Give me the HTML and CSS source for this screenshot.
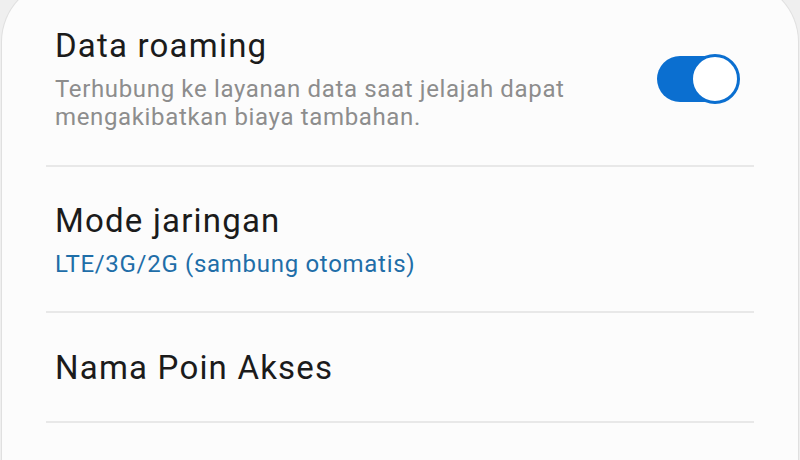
FILE: index.html
```html
<!DOCTYPE html>
<html lang="id">
<head>
    <meta charset="UTF-8">
    <meta name="viewport" content="width=device-width, initial-scale=1.0">
    <title>Jaringan seluler</title>
    <link rel="stylesheet" href="styles.css">
</head>
<body>

    <div class="card">
        <div class="item item-roaming">
            <div class="item-text">
                <div class="title">Data roaming</div>
                <div class="summary">Terhubung ke layanan data saat jelajah dapat<br>mengakibatkan biaya tambahan.</div>
            </div>
            <div class="switch">
                <div class="knob"></div>
            </div>
        </div>

        <div class="item item-mode">
            <div class="item-text">
                <div class="title">Mode jaringan</div>
                <div class="summary value">LTE/3G/2G (sambung otomatis)</div>
            </div>
        </div>

        <div class="item item-apn">
            <div class="item-text">
                <div class="title">Nama Poin Akses</div>
            </div>
        </div>
    </div>

</body>
</html>
```

FILE: styles.css
```css
body {
    margin: 0;
    background-color: #efefef;
    font-family: Roboto, "Noto Sans", sans-serif;
    overflow: hidden;
}

.card {
    margin: -20px 1px 0 1px;
    padding-top: 20px;
    height: 459px;
    background: #fcfcfc;
    border: 1px solid #e0e0e0;
    border-bottom: none;
    border-radius: 62px 62px 0 0;
}

.item {
    display: flex;
    align-items: flex-start;
    margin: 0 44px;
    padding: 0 15px 0 9px;
    border-bottom: 2px solid #e8e8e8;
}

.item-roaming {
    padding-top: 25px;
    padding-bottom: 34px;
}

.item-mode {
    padding-top: 34px;
    padding-bottom: 33px;
}

.item-apn {
    padding-top: 35px;
    padding-bottom: 33px;
}

.item-text {
    flex: 1;
}

.title {
    font-size: 33px;
    line-height: 40px;
    color: #1b1b1b;
    letter-spacing: 1.2px;
}

.summary {
    margin-top: 9px;
    font-size: 24px;
    line-height: 28px;
    color: #8d8d8d;
    letter-spacing: 0.65px;
}

.value {
    margin-top: 9px;
    color: #1f6ea8;
    letter-spacing: 0.7px;
}

/* toggle, switched on */
.switch {
    display: flex;
    justify-content: flex-end;
    align-items: center;
    width: 82px;
    height: 46px;
    margin-top: 30px;
    border-radius: 23px;
    background: #0b6fd0;
}

.knob {
    box-sizing: border-box;
    width: 50px;
    height: 50px;
    margin: -2px -1px;
    border: 3px solid #0b6fd0;
    border-radius: 50%;
    background: #ffffff;
}
```
